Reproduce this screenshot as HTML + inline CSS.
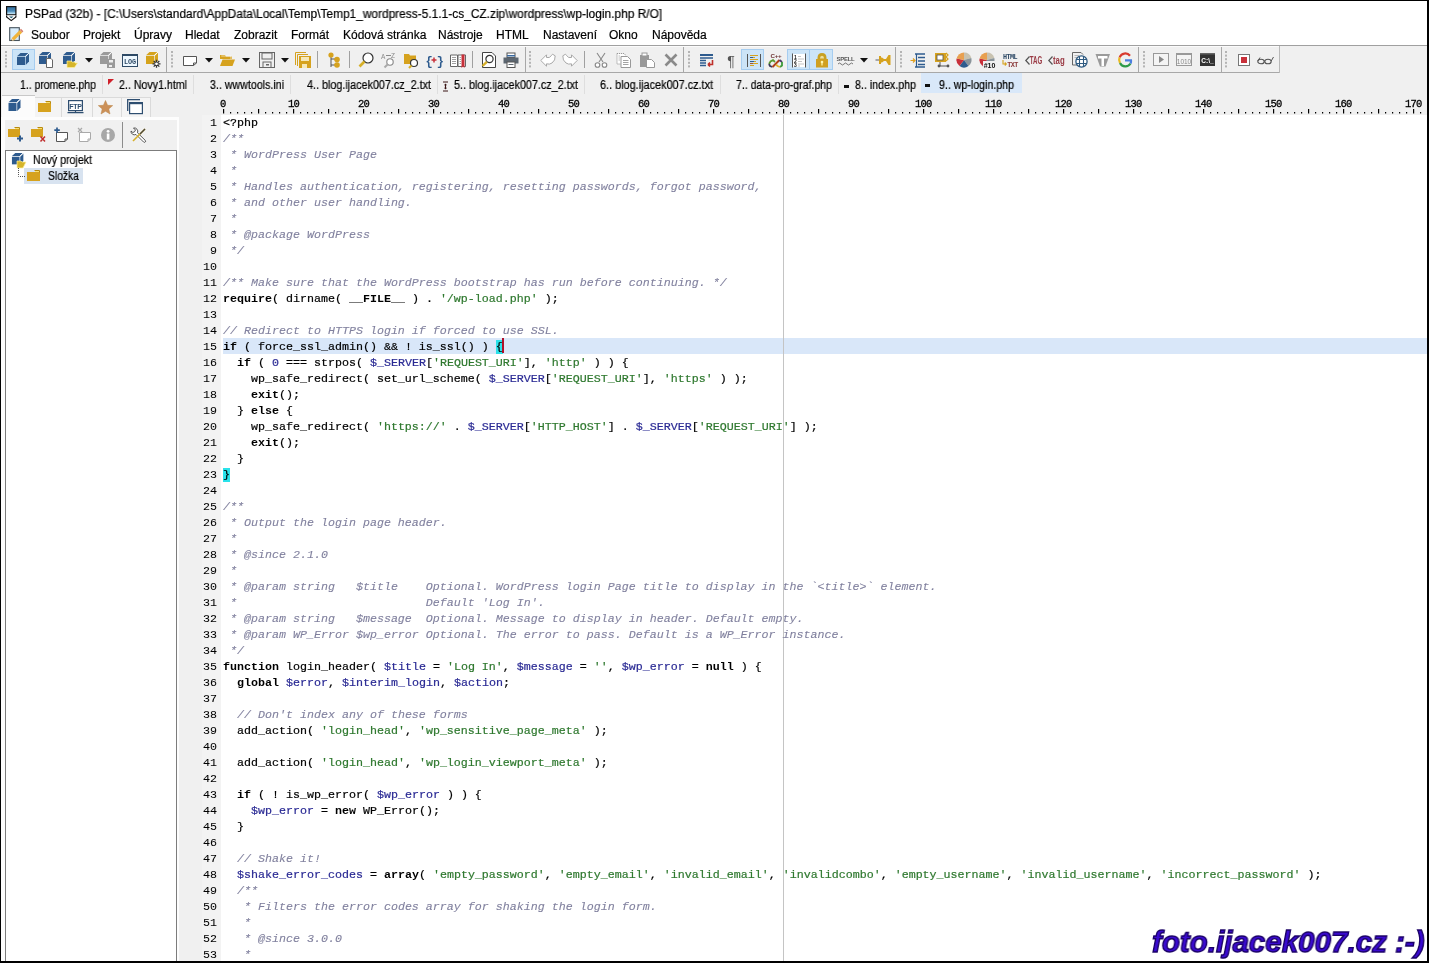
<!DOCTYPE html><html><head><meta charset="utf-8"><style>
html,body{margin:0;padding:0;width:1429px;height:963px;overflow:hidden;background:#fff}
.t{will-change:transform;-webkit-text-stroke:0.2px currentColor;position:absolute;white-space:pre;font-family:"Liberation Sans",sans-serif;}
.b{position:absolute}
.i{position:absolute;overflow:visible;will-change:transform}
.code{will-change:transform;-webkit-text-stroke:0.2px currentColor;position:absolute;left:223px;top:115px;font-family:"Liberation Mono",monospace;font-size:11.67px;line-height:16px;white-space:pre;color:#000}
.code div{height:16px}
.c{color:#80809e;font-style:italic;-webkit-text-stroke:0.1px currentColor}
.k{font-weight:bold;-webkit-text-stroke:0}
.s{color:#2e782e}
.v{color:#2a2a94}
.n{color:#2a2a94}
.ln{will-change:transform;-webkit-text-stroke:0.05px currentColor;position:absolute;left:180px;top:115px;width:37px;text-align:right;font-family:"Liberation Mono",monospace;font-size:11.67px;line-height:16px;color:#000;white-space:pre}
.rul{will-change:transform;-webkit-text-stroke:0.3px currentColor;position:absolute;font-family:"Liberation Mono",monospace;font-size:10.5px;line-height:10px;letter-spacing:-0.8px;color:#000;white-space:pre}
</style></head><body>

<div class="b" style="left:0px;top:0px;width:1429px;height:963px;background:#fff;"></div>
<svg class="i" style="left:6px;top:6px" width="11" height="16" viewBox="0 0 11 16"><defs><linearGradient id="tg" x1="0" y1="0" x2="0" y2="1"><stop offset="0" stop-color="#2f6c9c"/><stop offset="0.55" stop-color="#4a8ab8"/><stop offset="0.8" stop-color="#a8d4ec"/><stop offset="1" stop-color="#d8eef8"/></linearGradient></defs>
<rect x="0.6" y="0.6" width="9.3" height="8.2" fill="url(#tg)" stroke="#111" stroke-width="1.2"/>
<path d="M0.6 9.5 L0.6 11 L5.25 14.6 L9.9 11 L9.9 9.5" fill="#fff" stroke="#111" stroke-width="1.2"/>
<path d="M3 10.6 L7.5 10.6 L5.25 12.2Z" fill="#1e5a70"/></svg>
<div class="t " style="left:24.5px;top:7.84px;font-size:12px;line-height:12px;color:#000;transform:scaleX(0.993);transform-origin:0 0;">PSPad (32b) - [C:\Users\standard\AppData\Local\Temp\Temp1_wordpress-5.1.1-cs_CZ.zip\wordpress\wp-login.php R/O]</div>
<svg class="i" style="left:9px;top:27px" width="15" height="15" viewBox="0 0 15 15"><rect x="0.7" y="0.7" width="9.6" height="12.8" fill="#d8ecfa" stroke="#46525c" stroke-width="1.1"/>
<path d="M2.6 11.2 L10.8 3 L13.2 5.4 L5 13.6Z" fill="#f0b43c"/>
<path d="M10.8 3 L12 1.8 L14.4 4.2 L13.2 5.4Z" fill="#d88070"/>
<path d="M2.6 11.2 L2 13.8 L5 13.6Z" fill="#f8d8a0"/><path d="M2.2 12.6 L2 13.8 L3.4 13.6Z" fill="#111"/></svg>
<div class="t " style="left:30.9px;top:28.64px;font-size:12px;line-height:12px;color:#000;">Soubor</div>
<div class="t " style="left:83.1px;top:28.64px;font-size:12px;line-height:12px;color:#000;">Projekt</div>
<div class="t " style="left:134.1px;top:28.64px;font-size:12px;line-height:12px;color:#000;">Úpravy</div>
<div class="t " style="left:185.0px;top:28.64px;font-size:12px;line-height:12px;color:#000;">Hledat</div>
<div class="t " style="left:233.5px;top:28.64px;font-size:12px;line-height:12px;color:#000;">Zobrazit</div>
<div class="t " style="left:291.0px;top:28.64px;font-size:12px;line-height:12px;color:#000;">Formát</div>
<div class="t " style="left:343.0px;top:28.64px;font-size:12px;line-height:12px;color:#000;">Kódová stránka</div>
<div class="t " style="left:438.0px;top:28.64px;font-size:12px;line-height:12px;color:#000;">Nástroje</div>
<div class="t " style="left:496.0px;top:28.64px;font-size:12px;line-height:12px;color:#000;">HTML</div>
<div class="t " style="left:543.0px;top:28.64px;font-size:12px;line-height:12px;color:#000;">Nastavení</div>
<div class="t " style="left:609.0px;top:28.64px;font-size:12px;line-height:12px;color:#000;">Okno</div>
<div class="t " style="left:652.2px;top:28.64px;font-size:12px;line-height:12px;color:#000;">Nápověda</div>
<div class="b" style="left:1px;top:45px;width:1427px;height:1px;background:#a0a0a0;"></div>
<div class="b" style="left:1px;top:46px;width:1427px;height:50px;background:#f0f0f0;"></div>
<div class="b" style="left:1px;top:46px;width:1279px;height:1px;background:#fbfbfb;"></div>
<div class="b" style="left:1px;top:72px;width:1279px;height:1px;background:#a8a8a8;"></div>
<div class="b" style="left:1279px;top:46px;width:1px;height:27px;background:#b8b8b8;"></div>
<svg class="i" style="left:5px;top:51px" width="2" height="18" viewBox="0 0 2 18"><rect x="0" y="0.0" width="2" height="2" fill="#b4b4b4"/><rect x="0" y="3.6" width="2" height="2" fill="#b4b4b4"/><rect x="0" y="7.2" width="2" height="2" fill="#b4b4b4"/><rect x="0" y="10.8" width="2" height="2" fill="#b4b4b4"/><rect x="0" y="14.4" width="2" height="2" fill="#b4b4b4"/></svg>
<div class="b" style="left:12px;top:49px;width:23px;height:21px;background:#cce4f7;box-shadow:inset 0 0 0 1px #a6cdf0;"></div>
<svg class="i" style="left:16px;top:52px" width="16" height="16" viewBox="0 0 16 16"><g transform="translate(0,0) scale(1.0)"><rect x="1" y="5" width="8" height="8" fill="#2e5b8e"/>
<path d="M1 4.3 L4.5 1 L12.5 1 L9.2 4.3Z" fill="#2e5b8e"/>
<path d="M9.7 5 L13 1.6 L13 9.6 L9.7 13Z" fill="#2e5b8e"/>
<path d="M9.2 4.6 L12.8 1.2" stroke="#fff" stroke-width="0.9"/></g></svg>
<svg class="i" style="left:38px;top:52px" width="16" height="16" viewBox="0 0 16 16"><g transform="translate(0,-1) scale(1.0)"><rect x="1" y="5" width="8" height="8" fill="#2e5b8e"/>
<path d="M1 4.3 L4.5 1 L12.5 1 L9.2 4.3Z" fill="#2e5b8e"/>
<path d="M9.7 5 L13 1.6 L13 9.6 L9.7 13Z" fill="#2e5b8e"/>
<path d="M9.2 4.6 L12.8 1.2" stroke="#fff" stroke-width="0.9"/></g><path d="M8.5 6.5 L13 6.5 L14.5 8 L14.5 15.5 L8.5 15.5Z" fill="#fff" stroke="#666" stroke-width="1"/></svg>
<svg class="i" style="left:62px;top:52px" width="16" height="16" viewBox="0 0 16 16"><g transform="translate(0,-1) scale(1.0)"><rect x="1" y="5" width="8" height="8" fill="#2e5b8e"/>
<path d="M1 4.3 L4.5 1 L12.5 1 L9.2 4.3Z" fill="#2e5b8e"/>
<path d="M9.7 5 L13 1.6 L13 9.6 L9.7 13Z" fill="#2e5b8e"/>
<path d="M9.2 4.6 L12.8 1.2" stroke="#fff" stroke-width="0.9"/></g><path d="M5 9 L9 9 L10 10 L13 10 L13 11 L15.5 11 L12.5 15.5 L5 15.5Z" fill="#d6b52a" stroke="#fff4a0" stroke-width="0.7"/></svg>
<svg class="i" style="left:85px;top:58px" width="8" height="5" viewBox="0 0 8 5"><path d="M0 0 L8 0 L4 4.5Z" fill="#111"/></svg>
<svg class="i" style="left:99px;top:52px" width="16" height="16" viewBox="0 0 16 16"><g transform="translate(0,-1) scale(1.0)"><rect x="1" y="5" width="8" height="8" fill="#9a9a9a"/>
<path d="M1 4.3 L4.5 1 L12.5 1 L9.2 4.3Z" fill="#9a9a9a"/>
<path d="M9.7 5 L13 1.6 L13 9.6 L9.7 13Z" fill="#9a9a9a"/>
<path d="M9.2 4.6 L12.8 1.2" stroke="#fff" stroke-width="0.9"/></g><rect x="8" y="7" width="8" height="9" fill="#9a9a9a"/><rect x="10" y="8" width="4" height="2.5" fill="#eee"/><rect x="10" y="13" width="3" height="2" fill="#eee"/></svg>
<svg class="i" style="left:122px;top:52px" width="16" height="16" viewBox="0 0 16 16"><rect x="0.5" y="2.5" width="15" height="12" fill="#eef8ff" stroke="#2f4a66"/><rect x="0.5" y="2.5" width="15" height="1.5" fill="#2f4a66"/><text x="8" y="12.3" font-family="Liberation Mono" font-weight="bold" font-size="6.8" text-anchor="middle" fill="#2f4a66">LOG</text></svg>
<svg class="i" style="left:145px;top:52px" width="16" height="16" viewBox="0 0 16 16"><g transform="translate(0,-1) scale(1.0)"><rect x="1" y="5" width="8" height="8" fill="#d5a31c"/>
<path d="M1 4.3 L4.5 1 L12.5 1 L9.2 4.3Z" fill="#d5a31c"/>
<path d="M9.7 5 L13 1.6 L13 9.6 L9.7 13Z" fill="#d5a31c"/>
<path d="M9.2 4.6 L12.8 1.2" stroke="#fff" stroke-width="0.9"/></g><g transform="translate(11.5,11.8)" stroke="#333" stroke-width="1.3"><path d="M-4 0 L4 0 M0 -4 L0 4 M-2.8 -2.8 L2.8 2.8 M-2.8 2.8 L2.8 -2.8"/></g><circle cx="11.5" cy="11.8" r="1.4" fill="#fff"/></svg>
<div class="b" style="left:166px;top:47px;width:1px;height:25px;background:#a8a8a8;"></div>
<svg class="i" style="left:171px;top:51px" width="2" height="18" viewBox="0 0 2 18"><rect x="0" y="0.0" width="2" height="2" fill="#b4b4b4"/><rect x="0" y="3.6" width="2" height="2" fill="#b4b4b4"/><rect x="0" y="7.2" width="2" height="2" fill="#b4b4b4"/><rect x="0" y="10.8" width="2" height="2" fill="#b4b4b4"/><rect x="0" y="14.4" width="2" height="2" fill="#b4b4b4"/></svg>
<svg class="i" style="left:182px;top:55px" width="16" height="12" viewBox="0 0 16 12"><path d="M1.5 1.5 L14.5 1.5 L14.5 8 L11.5 10.5 L1.5 10.5Z" fill="#fff" stroke="#555"/><path d="M11.5 10.5 L11.5 8 L14.5 8" fill="none" stroke="#555"/></svg>
<svg class="i" style="left:205px;top:58px" width="8" height="5" viewBox="0 0 8 5"><path d="M0 0 L8 0 L4 4.5Z" fill="#111"/></svg>
<svg class="i" style="left:219px;top:52px" width="17" height="16" viewBox="0 0 17 16"><path d="M1 3 L6 3 L7 4.5 L13 4.5 L13 7 L1 7Z" fill="#d6a21e"/><path d="M1 14 L3.5 7.5 L16 7.5 L13.5 14Z" fill="#d6a21e"/><path d="M2.2 4 L12 4 L12 7" fill="none" stroke="#fff" stroke-width="0.6"/></svg>
<svg class="i" style="left:242px;top:58px" width="8" height="5" viewBox="0 0 8 5"><path d="M0 0 L8 0 L4 4.5Z" fill="#111"/></svg>
<svg class="i" style="left:259px;top:52px" width="16" height="16" viewBox="0 0 16 16"><rect x="0.5" y="0.5" width="15" height="15" fill="none" stroke="#666"/><rect x="3" y="1" width="10" height="6" fill="none" stroke="#666"/><rect x="4" y="10" width="8" height="5.5" fill="none" stroke="#666"/><rect x="7" y="12" width="3" height="1.5" fill="#666"/></svg>
<svg class="i" style="left:281px;top:58px" width="8" height="5" viewBox="0 0 8 5"><path d="M0 0 L8 0 L4 4.5Z" fill="#111"/></svg>
<svg class="i" style="left:295px;top:52px" width="16" height="16" viewBox="0 0 16 16"><path d="M0.5 13 L0.5 0.5 L11 0.5" fill="none" stroke="#d6a21e"/><path d="M2.5 14 L2.5 2.5 L13 2.5" fill="none" stroke="#d6a21e"/><rect x="4" y="4" width="12" height="12" fill="#d6a21e"/><rect x="6" y="5" width="8" height="4" fill="#f6e8b8"/><rect x="7" y="12" width="5" height="4" fill="#f6e8b8"/></svg>
<div class="b" style="left:317px;top:51px;width:1px;height:17px;background:#a0a0a0;"></div>
<svg class="i" style="left:328px;top:52px" width="12" height="16" viewBox="0 0 12 16"><path d="M3 2 L3 15 M3 7 L9 7 M3 13 L9 13" stroke="#555" stroke-width="1"/><circle cx="3" cy="3" r="2.6" fill="#d6a21e"/><circle cx="9" cy="7.5" r="2.8" fill="#d6a21e"/><circle cx="9" cy="13" r="2.8" fill="#d6a21e"/></svg>
<div class="b" style="left:349px;top:51px;width:1px;height:17px;background:#a0a0a0;"></div>
<svg class="i" style="left:358px;top:52px" width="16" height="16" viewBox="0 0 16 16"><circle cx="10" cy="6" r="5" fill="#fff" stroke="#333" stroke-width="1.2"/><path d="M6.5 9.5 L1.5 14.5" stroke="#d6b02a" stroke-width="2.6"/></svg>
<svg class="i" style="left:381px;top:52px" width="16" height="16" viewBox="0 0 16 16"><text x="0" y="7" font-family="Liberation Sans" font-size="6.5" fill="#888">A</text><text x="10" y="6" font-family="Liberation Sans" font-size="6.5" fill="#888">Z</text><path d="M5 3.5 L10 3.5" stroke="#888"/><circle cx="9" cy="10" r="3.2" fill="#fff" stroke="#888" stroke-width="1.1"/><path d="M6.8 12.3 L3.5 15.5" stroke="#aaa" stroke-width="2"/></svg>
<svg class="i" style="left:403px;top:52px" width="16" height="16" viewBox="0 0 16 16"><path d="M1 2 L6 2 L7 3.5 L13 3.5 L13 12 L1 12Z" fill="#d6a21e"/><circle cx="11" cy="11" r="3.5" fill="#fff" stroke="#333" stroke-width="1.2"/><path d="M8.5 13.5 L6 16" stroke="#d6b02a" stroke-width="2.2"/></svg>
<svg class="i" style="left:426px;top:52px" width="16" height="16" viewBox="0 0 16 16"><text x="8" y="12.5" font-family="Liberation Mono" font-weight="bold" font-size="12" text-anchor="middle" fill="#2e5b8e" letter-spacing="-1.5">{ }</text><path d="M8 5.5 L8 10.5 M5.5 8 L10.5 8" stroke="#c8303a" stroke-width="1.5"/></svg>
<svg class="i" style="left:450px;top:52px" width="16" height="16" viewBox="0 0 16 16"><path d="M0.5 3 H7.5 V14.5 H0.5Z M8 3 H15.5 V14.5 H8Z" fill="#fff" stroke="#666" stroke-width="1"/><path d="M2 5.5 H6 M2 7.5 H6 M2 9.5 H6 M2 11.5 H6 M9.5 5.5 H11 M9.5 7.5 H11 M9.5 9.5 H11 M9.5 11.5 H11" stroke="#888" stroke-width="0.8"/><path d="M11.5 2.5 H14.5 V16 L13 14.5 L11.5 16Z" fill="#c8303a"/></svg>
<div class="b" style="left:472px;top:51px;width:1px;height:17px;background:#a0a0a0;"></div>
<svg class="i" style="left:481px;top:52px" width="16" height="16" viewBox="0 0 16 16"><path d="M1.5 0.5 L11 0.5 L14.5 4 L14.5 15.5 L1.5 15.5Z" fill="#fff" stroke="#444"/><circle cx="8.5" cy="7" r="3.6" fill="#fff" stroke="#333" stroke-width="1.2"/><path d="M5.8 9.8 L1.5 14" stroke="#d6b02a" stroke-width="2.4"/></svg>
<svg class="i" style="left:503px;top:52px" width="16" height="16" viewBox="0 0 16 16"><rect x="4" y="1" width="8" height="4.5" fill="#fff" stroke="#555"/><rect x="4" y="3" width="8" height="1.5" fill="#3a6aa0"/><rect x="0.5" y="5.5" width="15" height="6" fill="#5c6670"/><rect x="4" y="10" width="8" height="5.5" fill="#fff" stroke="#555"/><rect x="5.5" y="12" width="5" height="1" fill="#5c6670"/></svg>
<div class="b" style="left:525px;top:47px;width:1px;height:25px;background:#a8a8a8;"></div>
<svg class="i" style="left:529px;top:51px" width="2" height="18" viewBox="0 0 2 18"><rect x="0" y="0.0" width="2" height="2" fill="#b4b4b4"/><rect x="0" y="3.6" width="2" height="2" fill="#b4b4b4"/><rect x="0" y="7.2" width="2" height="2" fill="#b4b4b4"/><rect x="0" y="10.8" width="2" height="2" fill="#b4b4b4"/><rect x="0" y="14.4" width="2" height="2" fill="#b4b4b4"/></svg>
<svg class="i" style="left:540px;top:52px" width="16" height="16" viewBox="0 0 16 16"><path d="M0.8 8.5 L6.5 2.8 L6.5 5.5 Q9.5 6.5 11.5 3.5 L12.5 2.2 L15.2 3.8 Q15.5 8.5 12 11 Q9.5 12.8 6.5 11.8 L6.5 14.2Z" fill="#fff" stroke="#a8a8a8" stroke-width="1"/></svg>
<svg class="i" style="left:562px;top:52px" width="16" height="16" viewBox="0 0 16 16"><g transform="translate(16,0) scale(-1,1)"><path d="M0.8 8.5 L6.5 2.8 L6.5 5.5 Q9.5 6.5 11.5 3.5 L12.5 2.2 L15.2 3.8 Q15.5 8.5 12 11 Q9.5 12.8 6.5 11.8 L6.5 14.2Z" fill="#fff" stroke="#a8a8a8" stroke-width="1"/></g></svg>
<div class="b" style="left:584px;top:51px;width:1px;height:17px;background:#a0a0a0;"></div>
<svg class="i" style="left:593px;top:52px" width="16" height="16" viewBox="0 0 16 16"><path d="M4 1 L10 10 M12 1 L6 10" stroke="#888" stroke-width="1.1"/><circle cx="4.5" cy="13" r="2.3" fill="#fff" stroke="#888" stroke-width="1.1"/><circle cx="11.5" cy="13" r="2.3" fill="#fff" stroke="#888" stroke-width="1.1"/></svg>
<svg class="i" style="left:616px;top:52px" width="16" height="16" viewBox="0 0 16 16"><path d="M1 1.5 H8 L9.5 3 V12 H1Z" fill="#fff" stroke="#999" stroke-dasharray="1.2 0.8"/><path d="M5 4.5 H11.5 L14.5 7.5 V15.5 H5Z" fill="#fff" stroke="#999"/><path d="M7 8.5 H12.5 M7 10.5 H12.5 M7 12.5 H12.5" stroke="#999" stroke-width="0.9"/><path d="M2.5 4 H4 M2.5 6 H4 M2.5 8 H4" stroke="#aaa" stroke-width="0.8"/></svg>
<svg class="i" style="left:639px;top:52px" width="16" height="16" viewBox="0 0 16 16"><rect x="1" y="3" width="9" height="12" fill="#999"/><rect x="3" y="1" width="5" height="3" fill="#fff" stroke="#999"/><path d="M7.5 7.5 H12.5 L15.5 10.5 V15.5 H7.5Z" fill="#fff" stroke="#999"/></svg>
<svg class="i" style="left:663px;top:52px" width="16" height="16" viewBox="0 0 16 16"><path d="M2.5 2.5 L13.5 13.5 M13.5 2.5 L2.5 13.5" stroke="#8a8a8a" stroke-width="2.6"/></svg>
<div class="b" style="left:683px;top:47px;width:1px;height:25px;background:#a8a8a8;"></div>
<svg class="i" style="left:688px;top:51px" width="2" height="18" viewBox="0 0 2 18"><rect x="0" y="0.0" width="2" height="2" fill="#b4b4b4"/><rect x="0" y="3.6" width="2" height="2" fill="#b4b4b4"/><rect x="0" y="7.2" width="2" height="2" fill="#b4b4b4"/><rect x="0" y="10.8" width="2" height="2" fill="#b4b4b4"/><rect x="0" y="14.4" width="2" height="2" fill="#b4b4b4"/></svg>
<svg class="i" style="left:699px;top:52px" width="16" height="16" viewBox="0 0 16 16"><path d="M1 3 H14" stroke="#2e5b8e" stroke-width="2"/><path d="M1 6 H14 M1 8.5 H7 M1 11 H7 M1 13.5 H7" stroke="#2e5b8e" stroke-width="1.3"/><path d="M13.5 8 V12.5 H9 M9 12.5 L11 10.5 M9 12.5 L11 14.5" stroke="#c0302a" stroke-width="1.6" fill="none"/></svg>
<svg class="i" style="left:723px;top:52px" width="16" height="16" viewBox="0 0 16 16"><text x="8" y="13.5" font-family="Liberation Sans" font-size="14" text-anchor="middle" fill="#555">¶</text></svg>
<div class="b" style="left:741px;top:49px;width:23px;height:21px;background:#cce4f7;box-shadow:inset 0 0 0 1px #a6cdf0;"></div>
<svg class="i" style="left:746px;top:52px" width="16" height="16" viewBox="0 0 16 16"><path d="M1.5 2 V15 M14.5 2 V15" stroke="#555" stroke-width="1"/><path d="M4 3.5 H12 M4 5.5 H9 M4 7.5 H12 M4 9.5 H10 M4 11.5 H12 M4 13.5 H8" stroke="#d6a21e" stroke-width="1.1"/><path d="M4 5.5 H7 M4 9.5 H8" stroke="#2e5b8e" stroke-width="1.1"/><path d="M4 11.5 H7" stroke="#a05a30" stroke-width="1.1"/></svg>
<svg class="i" style="left:768px;top:52px" width="16" height="16" viewBox="0 0 16 16"><text x="8" y="6.3" font-family="Liberation Sans" font-weight="bold" font-size="6.2" text-anchor="middle" fill="#6e3434" letter-spacing="-0.3">C++</text><path d="M7 10 L5 8.2 L2.5 9.5 L1 12" fill="none" stroke="#5a9a30" stroke-width="1.8"/><path d="M1 12 L2 14 L4.5 15" fill="none" stroke="#3a3a5a" stroke-width="1.8"/><path d="M4.5 15 L11.5 8" fill="none" stroke="#b0401e" stroke-width="2"/><path d="M11.5 8 L14 10" fill="none" stroke="#4a3a6a" stroke-width="1.8"/><path d="M14 10 L14 13.5 L12 15" fill="none" stroke="#3a9a3a" stroke-width="1.8"/><path d="M12 15 L9.5 14 L8 12.5" fill="none" stroke="#e0b030" stroke-width="1.8"/></svg>
<div class="b" style="left:787px;top:49px;width:46px;height:21px;background:#cce4f7;box-shadow:inset 0 0 0 1px #a6cdf0;"></div>
<div class="b" style="left:809px;top:49px;width:1px;height:21px;background:#a6cdf0;"></div>
<svg class="i" style="left:791px;top:52px" width="16" height="16" viewBox="0 0 16 16"><rect x="2" y="2" width="12" height="13" fill="#fff"/><path d="M1.5 1.5 V15.5 M14.5 1.5 V15.5" stroke="#555" stroke-width="1"/><text x="3" y="7" font-family="Liberation Sans" font-weight="bold" font-size="5" fill="#222">1</text><text x="3" y="11" font-family="Liberation Sans" font-weight="bold" font-size="5" fill="#222">2</text><text x="3" y="15" font-family="Liberation Sans" font-weight="bold" font-size="5" fill="#222">3</text><path d="M7 4.5 H10 M7 7 H13 M7 9.5 H11 M7 12 H13 M7 14 H9" stroke="#aaa" stroke-width="0.7"/></svg>
<svg class="i" style="left:814px;top:52px" width="16" height="16" viewBox="0 0 16 16"><path d="M3.5 7 V6 Q3.5 1 8 1 Q12.5 1 12.5 6 V7Z" fill="#c8a020"/><path d="M6 6.5 Q6 3.8 8 3.8 Q10 3.8 10 6.5Z" fill="#f0e0a0"/><rect x="2" y="7" width="12" height="8.5" fill="#d0a020"/><circle cx="8" cy="10" r="1.3" fill="#fff8b0"/><path d="M8 10 V13.5" stroke="#fff8b0" stroke-width="1.2"/></svg>
<svg class="i" style="left:837px;top:52px" width="17" height="16" viewBox="0 0 17 16"><text x="8.5" y="8.5" font-family="Liberation Sans" font-weight="bold" font-size="6" text-anchor="middle" fill="#555" letter-spacing="-0.3">SPELL</text><path d="M1 12 Q2.5 10 4 12 T7 12 T10 12 T13 12 T16 12" fill="none" stroke="#555" stroke-width="0.8"/></svg>
<svg class="i" style="left:860px;top:58px" width="8" height="5" viewBox="0 0 8 5"><path d="M0 0 L8 0 L4 4.5Z" fill="#111"/></svg>
<svg class="i" style="left:875px;top:52px" width="16" height="16" viewBox="0 0 16 16"><path d="M0.5 8 H6" stroke="#777" stroke-width="1.2"/><path d="M5 5.5 L7 5.5 L9 7 L11 7 L13.5 3 L15.5 3 L15.5 13 L13.5 13 L11 9 L9 9 L7 10.5 L5 10.5Z" fill="#d6a21e"/><path d="M5 4 V12" stroke="#d6a21e" stroke-width="2"/></svg>
<div class="b" style="left:895px;top:47px;width:1px;height:25px;background:#a8a8a8;"></div>
<svg class="i" style="left:900px;top:51px" width="2" height="18" viewBox="0 0 2 18"><rect x="0" y="0.0" width="2" height="2" fill="#b4b4b4"/><rect x="0" y="3.6" width="2" height="2" fill="#b4b4b4"/><rect x="0" y="7.2" width="2" height="2" fill="#b4b4b4"/><rect x="0" y="10.8" width="2" height="2" fill="#b4b4b4"/><rect x="0" y="14.4" width="2" height="2" fill="#b4b4b4"/></svg>
<svg class="i" style="left:910px;top:52px" width="16" height="16" viewBox="0 0 16 16"><path d="M5 2 H15 M8 5.5 H15 M8 9 H15 M8 12.5 H15 M5 15 H15" stroke="#2e5b8e" stroke-width="1.3"/><path d="M6.5 2 V15" stroke="#2e5b8e" stroke-width="1.2"/><path d="M0.5 8.5 H5 M3 6.5 L5 8.5 L3 10.5" stroke="#e0a020" stroke-width="1.2" fill="none"/></svg>
<svg class="i" style="left:934px;top:52px" width="16" height="16" viewBox="0 0 16 16"><rect x="1" y="1" width="11" height="9" fill="#d6a21e"/><rect x="3" y="3" width="6" height="5" fill="#fff" stroke="#555" stroke-width="0.8"/><path d="M12 1 L14 3 L12 5 L14 7 L12 9" stroke="#d6a21e" stroke-width="1.2" fill="none"/><path d="M6 10 V14 M5 14 H14" stroke="#555" stroke-width="1"/><circle cx="5" cy="14" r="1.4" fill="#555"/><circle cx="14" cy="14" r="1.4" fill="#555"/></svg>
<svg class="i" style="left:956px;top:52px" width="16" height="16" viewBox="0 0 16 16"><path d="M8 8 L8 0.5 A7.5 7.5 0 0 1 15.3 6Z" fill="#c8c2b0"/>
<path d="M8 8 L15.3 6 A7.5 7.5 0 0 1 12.5 14Z" fill="#8a949a"/>
<path d="M8 8 L12.5 14 A7.5 7.5 0 0 1 3.5 14Z" fill="#2e5b8e"/>
<path d="M8 8 L3.5 14 A7.5 7.5 0 0 1 0.6 6.5Z" fill="#c8303a"/>
<path d="M8 8 L0.6 6.5 A7.5 7.5 0 0 1 8 0.5Z" fill="#e8a050"/></svg>
<svg class="i" style="left:979px;top:52px" width="16" height="16" viewBox="0 0 16 16"><path d="M8 8 L8 0.5 A7.5 7.5 0 0 1 15.3 6Z" fill="#c8c2b0"/>
<path d="M8 8 L15.3 6 A7.5 7.5 0 0 1 12.5 14Z" fill="#8a949a"/>
<path d="M8 8 L12.5 14 A7.5 7.5 0 0 1 3.5 14Z" fill="#2e5b8e"/>
<path d="M8 8 L3.5 14 A7.5 7.5 0 0 1 0.6 6.5Z" fill="#c8303a"/>
<path d="M8 8 L0.6 6.5 A7.5 7.5 0 0 1 8 0.5Z" fill="#e8a050"/><rect x="4" y="9" width="13" height="7" fill="#f0f0f0"/><text x="10.5" y="15.8" font-family="Liberation Sans" font-weight="bold" font-size="7" text-anchor="middle" fill="#111">#10</text></svg>
<svg class="i" style="left:1001px;top:51px" width="18" height="18" viewBox="0 0 18 18"><text x="9" y="7.5" font-family="Liberation Mono" font-weight="bold" font-size="6.8" text-anchor="middle" fill="#2e4a66" letter-spacing="-0.6">HTML</text><text x="11.5" y="15.8" font-family="Liberation Mono" font-weight="bold" font-size="6.8" text-anchor="middle" fill="#8a3a3a" letter-spacing="-0.6">TXT</text><path d="M2 9 V13 H5 M3.8 11.5 L5.3 13 L3.8 14.5" stroke="#d6a21e" stroke-width="1.1" fill="none"/></svg>
<svg class="i" style="left:1025px;top:52px" width="17" height="16" viewBox="0 0 17 16"><path d="M4.5 4.5 L0.8 8.5 L4.5 12.5" fill="none" stroke="#555" stroke-width="1.2"/><text x="0" y="0" transform="translate(4.8,12) scale(0.62,1)" font-family="Liberation Sans" font-weight="bold" font-size="10" fill="#9a3a44">TAG</text></svg>
<svg class="i" style="left:1048px;top:52px" width="17" height="16" viewBox="0 0 17 16"><path d="M4.5 4.5 L0.8 8.5 L4.5 12.5" fill="none" stroke="#555" stroke-width="1.2"/><text x="0" y="0" transform="translate(5,12) scale(0.78,1)" font-family="Liberation Sans" font-weight="bold" font-size="10" fill="#9a3a44">tag</text></svg>
<svg class="i" style="left:1071px;top:51px" width="17" height="18" viewBox="0 0 17 18"><path d="M6 14 H1.5 V1.5 H10 L12 3.5" fill="none" stroke="#666" stroke-width="1"/><path d="M3.5 4.5 H8 M3.5 6.5 H6" stroke="#aaa" stroke-width="0.8"/><circle cx="10.5" cy="10.5" r="5.6" fill="#fff" stroke="#2e5a80" stroke-width="1.3"/><path d="M8.5 5.2 V15.8 M12.5 5.2 V15.8 M5.2 8.5 H15.8 M5.2 12.5 H15.8" stroke="#2e5a80" stroke-width="1.1"/></svg>
<svg class="i" style="left:1095px;top:52px" width="16" height="16" viewBox="0 0 16 16"><path d="M0.5 2 H15 L10.5 14.5 H5Z" fill="#9a9a9a"/><path d="M3 4 H12.5 V6.5 H9 V14 H6.5 V6.5 H3Z" fill="#fff"/></svg>
<svg class="i" style="left:1117px;top:52px" width="16" height="16" viewBox="0 0 16 16"><path d="M13 3.8 A6 6 0 0 0 2.6 5.5" fill="none" stroke="#d83a2e" stroke-width="2.2"/><path d="M2.6 5.5 A6 6 0 0 0 3 11" fill="none" stroke="#e8b820" stroke-width="2.2"/><path d="M3 11 A6 6 0 0 0 13.5 11.5" fill="none" stroke="#2e9a48" stroke-width="2.2"/><path d="M8 8.3 H14 A6 6 0 0 1 13.5 11.5" fill="none" stroke="#4a7ee0" stroke-width="2.2"/></svg>
<div class="b" style="left:1138px;top:47px;width:1px;height:25px;background:#a8a8a8;"></div>
<svg class="i" style="left:1143px;top:51px" width="2" height="18" viewBox="0 0 2 18"><rect x="0" y="0.0" width="2" height="2" fill="#b4b4b4"/><rect x="0" y="3.6" width="2" height="2" fill="#b4b4b4"/><rect x="0" y="7.2" width="2" height="2" fill="#b4b4b4"/><rect x="0" y="10.8" width="2" height="2" fill="#b4b4b4"/><rect x="0" y="14.4" width="2" height="2" fill="#b4b4b4"/></svg>
<svg class="i" style="left:1153px;top:51px" width="16" height="16" viewBox="0 0 16 16"><rect x="0.5" y="2.5" width="15" height="12" fill="#f4f4f4" stroke="#999"/><path d="M6 5 L11 8.5 L6 12Z" fill="#888"/></svg>
<svg class="i" style="left:1176px;top:51px" width="16" height="16" viewBox="0 0 16 16"><rect x="0.5" y="2.5" width="15" height="12" fill="#f4f4f4" stroke="#999"/><rect x="0.5" y="2.5" width="15" height="1.5" fill="#999"/><text x="8" y="12.5" font-family="Liberation Sans" font-size="6.5" text-anchor="middle" fill="#888">1010</text></svg>
<svg class="i" style="left:1200px;top:51px" width="16" height="16" viewBox="0 0 16 16"><rect x="0" y="2" width="15" height="13" fill="#333"/><rect x="0" y="2" width="15" height="1.5" fill="#666"/><text x="7.5" y="12" font-family="Liberation Sans" font-weight="bold" font-size="6.5" text-anchor="middle" fill="#fff">C:\_</text></svg>
<div class="b" style="left:1221px;top:47px;width:1px;height:25px;background:#a8a8a8;"></div>
<svg class="i" style="left:1225px;top:51px" width="2" height="18" viewBox="0 0 2 18"><rect x="0" y="0.0" width="2" height="2" fill="#b4b4b4"/><rect x="0" y="3.6" width="2" height="2" fill="#b4b4b4"/><rect x="0" y="7.2" width="2" height="2" fill="#b4b4b4"/><rect x="0" y="10.8" width="2" height="2" fill="#b4b4b4"/><rect x="0" y="14.4" width="2" height="2" fill="#b4b4b4"/></svg>
<svg class="i" style="left:1237px;top:52px" width="16" height="16" viewBox="0 0 16 16"><rect x="1.5" y="2.5" width="11" height="11" fill="#fff" stroke="#777"/><rect x="4" y="5" width="6" height="6" fill="#c8303a"/></svg>
<svg class="i" style="left:1257px;top:52px" width="17" height="16" viewBox="0 0 17 16"><ellipse cx="4" cy="9.5" rx="3.2" ry="2.3" fill="none" stroke="#555" stroke-width="1.1"/><ellipse cx="11" cy="9.5" rx="3.2" ry="2.3" fill="none" stroke="#555" stroke-width="1.1"/><path d="M7.2 9 H7.8 M0.8 9 L3 5.5 M14.2 9 L16.5 5" stroke="#555" stroke-width="1" fill="none"/></svg>
<div class="b" style="left:921px;top:73px;width:101px;height:20px;background:#d9e8f9;"></div>
<div class="t " style="left:19.5px;top:78.84px;font-size:12px;line-height:12px;color:#000;transform:scaleX(0.869);transform-origin:0 0;">1.. promene.php</div>
<div class="t " style="left:118.5px;top:78.84px;font-size:12px;line-height:12px;color:#000;transform:scaleX(0.887);transform-origin:0 0;">2.. Novy1.html</div>
<div class="t " style="left:209.5px;top:78.84px;font-size:12px;line-height:12px;color:#000;transform:scaleX(0.888);transform-origin:0 0;">3.. wwwtools.ini</div>
<div class="t " style="left:306.5px;top:78.84px;font-size:12px;line-height:12px;color:#000;transform:scaleX(0.898);transform-origin:0 0;">4.. blog.ijacek007.cz_2.txt</div>
<div class="t " style="left:453.5px;top:78.84px;font-size:12px;line-height:12px;color:#000;transform:scaleX(0.898);transform-origin:0 0;">5.. blog.ijacek007.cz_2.txt</div>
<div class="t " style="left:599.5px;top:78.84px;font-size:12px;line-height:12px;color:#000;transform:scaleX(0.906);transform-origin:0 0;">6.. blog.ijacek007.cz.txt</div>
<div class="t " style="left:735.5px;top:78.84px;font-size:12px;line-height:12px;color:#000;transform:scaleX(0.877);transform-origin:0 0;">7.. data-pro-graf.php</div>
<div class="t " style="left:854.5px;top:78.84px;font-size:12px;line-height:12px;color:#000;transform:scaleX(0.888);transform-origin:0 0;">8.. index.php</div>
<div class="t " style="left:938.5px;top:78.84px;font-size:12px;line-height:12px;color:#000;transform:scaleX(0.885);transform-origin:0 0;">9.. wp-login.php</div>
<div class="b" style="left:102px;top:75px;width:1px;height:19px;background:#dedede;"></div>
<div class="b" style="left:193px;top:75px;width:1px;height:19px;background:#dedede;"></div>
<div class="b" style="left:290px;top:75px;width:1px;height:19px;background:#dedede;"></div>
<div class="b" style="left:437px;top:75px;width:1px;height:19px;background:#dedede;"></div>
<div class="b" style="left:584px;top:75px;width:1px;height:19px;background:#dedede;"></div>
<div class="b" style="left:720px;top:75px;width:1px;height:19px;background:#dedede;"></div>
<div class="b" style="left:838px;top:75px;width:1px;height:19px;background:#dedede;"></div>
<svg class="i" style="left:108px;top:79px" width="6" height="6" viewBox="0 0 6 6"><path d="M0 0 L6 0 L0 6Z" fill="#d0202a"/></svg>
<svg class="i" style="left:443px;top:80.5px" width="6" height="11" viewBox="0 0 6 11"><path d="M0 1 H5 M0 10 H5 M2.5 3 V8" stroke="#3a1414" stroke-width="1.1" fill="none"/><path d="M1 4.2 L2.5 2.6 L4 4.2Z M1 6.8 L2.5 8.4 L4 6.8Z" fill="#3a1414"/></svg>
<div class="b" style="left:844px;top:85px;width:5px;height:3px;background:#111;"></div>
<div class="b" style="left:925px;top:84px;width:5px;height:3px;background:#111;"></div>
<div class="b" style="left:1px;top:95px;width:178px;height:866px;background:#f0f0f0;"></div>
<div class="b" style="left:34px;top:97px;width:28px;height:20px;background:#f4f4f4;box-shadow:inset -1px 0 0 #dadada, inset 0 1px 0 #dadada;"></div>
<div class="b" style="left:62px;top:97px;width:31px;height:20px;background:#f4f4f4;box-shadow:inset -1px 0 0 #dadada, inset 0 1px 0 #dadada;"></div>
<div class="b" style="left:93px;top:97px;width:29px;height:20px;background:#f4f4f4;box-shadow:inset -1px 0 0 #dadada, inset 0 1px 0 #dadada;"></div>
<div class="b" style="left:122px;top:97px;width:29px;height:20px;background:#f4f4f4;box-shadow:inset -1px 0 0 #dadada, inset 0 1px 0 #dadada;"></div>
<div class="b" style="left:2px;top:95px;width:33px;height:23px;background:#fcfcfc;box-shadow:inset 0 1px 0 #c8c8c8;"></div>
<div class="b" style="left:1px;top:117px;width:178px;height:846px;background:#fdfdfd;"></div>
<div class="b" style="left:5px;top:120px;width:172px;height:30px;background:#f0f0f0;"></div>
<div class="b" style="left:5px;top:150px;width:172px;height:815px;background:#fff;box-shadow:inset 0 0 0 1px #7c7c7c;"></div>
<svg class="i" style="left:8px;top:98px" width="14" height="14" viewBox="0 0 14 14"><g transform="translate(-0.5,0) scale(1.0)"><rect x="1" y="5" width="8" height="8" fill="#2e5b8e"/>
<path d="M1 4.3 L4.5 1 L12.5 1 L9.2 4.3Z" fill="#2e5b8e"/>
<path d="M9.7 5 L13 1.6 L13 9.6 L9.7 13Z" fill="#2e5b8e"/>
<path d="M9.2 4.6 L12.8 1.2" stroke="#fff" stroke-width="0.9"/></g></svg>
<svg class="i" style="left:37px;top:100px" width="14" height="13" viewBox="0 0 14 13"><path d="M1 3 H14 V12 H1Z" fill="#d6a21e"/><path d="M8.5 1.5 H13.5 V3.5" fill="none" stroke="#b88a10" stroke-width="1"/><path d="M9 2.5 H13" stroke="#f8e070" stroke-width="1"/></svg>
<svg class="i" style="left:67px;top:100px" width="17" height="14" viewBox="0 0 17 14"><rect x="1.6" y="0.6" width="13.8" height="10" fill="#fff" stroke="#2e4e70" stroke-width="1.2"/><text x="8.5" y="8.6" font-family="Liberation Sans" font-weight="bold" font-size="7" text-anchor="middle" fill="#2e4e70" letter-spacing="-0.2">FTP</text><path d="M8.5 10.6 V12.5 M0.5 12.6 H16.5" stroke="#2e4e70" stroke-width="1.2"/></svg>
<svg class="i" style="left:98px;top:100px" width="15" height="15" viewBox="0 0 15 15"><path d="M7.5 0.5 L9.6 5.3 L14.7 5.6 L10.8 8.9 L12 14 L7.5 11.3 L3 14 L4.2 8.9 L0.3 5.6 L5.4 5.3Z" fill="#cc9058" stroke="#b8864a" stroke-width="0.5"/></svg>
<svg class="i" style="left:127px;top:99px" width="17" height="16" viewBox="0 0 17 16"><path d="M0.7 12 V0.7 H13" fill="none" stroke="#2e4e70" stroke-width="1.3"/><rect x="2.6" y="3.6" width="12.8" height="11" fill="#fff" stroke="#2e4e70" stroke-width="1.2"/><rect x="2.6" y="3.6" width="12.8" height="1.6" fill="#2e4e70"/></svg>
<svg class="i" style="left:7px;top:127px" width="17" height="16" viewBox="0 0 17 16"><path d="M1 2 H13 V10 H1Z" fill="#d6a21e"/><path d="M7.5 0.5 H12.5 V2.5" fill="none" stroke="#b88a10" stroke-width="1"/><path d="M8 1.5 H12" stroke="#f8e070" stroke-width="1"/><path d="M13 8.5 V14.5 M10 11.5 H16" stroke="#2e5b8e" stroke-width="2"/></svg>
<svg class="i" style="left:30px;top:127px" width="17" height="16" viewBox="0 0 17 16"><path d="M1 2 H13 V10 H1Z" fill="#d6a21e"/><path d="M7.5 0.5 H12.5 V2.5" fill="none" stroke="#b88a10" stroke-width="1"/><path d="M8 1.5 H12" stroke="#f8e070" stroke-width="1"/><path d="M10.5 9.5 L15 14.5 M15 9.5 L10.5 14.5" stroke="#c03030" stroke-width="1.5"/></svg>
<svg class="i" style="left:53px;top:127px" width="17" height="16" viewBox="0 0 17 16"><path d="M3.5 5.5 H14.5 V12 L12 14.5 H3.5Z" fill="#fff" stroke="#555"/><path d="M12 14.5 V12 H14.5" fill="none" stroke="#555"/><path d="M4 0.5 V6 M1.3 3.2 H6.8" stroke="#2e5b8e" stroke-width="1.7"/></svg>
<svg class="i" style="left:76px;top:127px" width="17" height="16" viewBox="0 0 17 16"><path d="M3.5 5.5 H14.5 V12 L12 14.5 H3.5Z" fill="#fff" stroke="#aaa"/><path d="M12 14.5 V12 H14.5" fill="none" stroke="#aaa"/><path d="M2 1 L6 5 M6 1 L2 5" stroke="#aaa" stroke-width="1.2"/></svg>
<svg class="i" style="left:100px;top:127px" width="16" height="16" viewBox="0 0 16 16"><circle cx="8" cy="8" r="7" fill="#a8a8a8"/><rect x="6.8" y="6.5" width="2.6" height="6" fill="#fff"/><circle cx="8.1" cy="4.3" r="1.4" fill="#fff"/></svg>
<div class="b" style="left:122px;top:122px;width:1px;height:26px;background:#8c8c8c;"></div>
<svg class="i" style="left:130px;top:127px" width="17" height="16" viewBox="0 0 17 16"><path d="M5 6 L14.5 15" stroke="#fff" stroke-width="3.5"/><path d="M5 6 L14.5 15" stroke="#555" stroke-width="3.5" stroke-opacity="0" /><path d="M1 4 A3.5 3.5 0 0 0 6 7.5 L13.5 15 A1.2 1.2 0 0 0 15.2 13.3 L7.5 5.8 A3.5 3.5 0 0 0 3.5 1 L5.5 3 L4.5 4.8 L2.8 5.5Z" fill="#fff" stroke="#444" stroke-width="0.9"/><path d="M15 2 L3 14" stroke="#d6b02a" stroke-width="1.6"/><path d="M15 2 L10 7" stroke="#444" stroke-width="1.2"/></svg>
<svg class="i" style="left:11px;top:152px" width="17" height="17" viewBox="0 0 17 17"><g transform="translate(0,0) scale(0.95)"><rect x="1" y="5" width="8" height="8" fill="#2e5b8e"/>
<path d="M1 4.3 L4.5 1 L12.5 1 L9.2 4.3Z" fill="#2e5b8e"/>
<path d="M9.7 5 L13 1.6 L13 9.6 L9.7 13Z" fill="#2e5b8e"/>
<path d="M9.2 4.6 L12.8 1.2" stroke="#fff" stroke-width="0.9"/></g><path d="M6 9 L10 9 L11 10 L15 10 L12 16 L6 16Z" fill="#d6b52a" stroke="#fff4a0" stroke-width="0.7"/></svg>
<div class="t " style="left:33.0px;top:153.84px;font-size:12px;line-height:12px;color:#000;transform:scaleX(0.885);transform-origin:0 0;">Nový projekt</div>
<div class="b" style="left:24px;top:168px;width:59px;height:16px;background:#d8e3f0;"></div>
<svg class="i" style="left:18px;top:168px" width="8" height="10" viewBox="0 0 8 10"><path d="M0.5 0 V8.5 H8" stroke="#555" stroke-width="1" stroke-dasharray="1 1" fill="none"/></svg>
<svg class="i" style="left:26px;top:169px" width="15" height="13" viewBox="0 0 15 13"><path d="M1 3 H14 V12 H1Z" fill="#d6a21e"/><path d="M8.5 1.5 H13.5 V3.5" fill="none" stroke="#b88a10" stroke-width="1"/><path d="M9 2.5 H13" stroke="#f8e070" stroke-width="1"/></svg>
<div class="t " style="left:48.0px;top:169.84px;font-size:12px;line-height:12px;color:#000;transform:scaleX(0.86);transform-origin:0 0;">Složka</div>
<div class="b" style="left:179px;top:95px;width:1249px;height:20px;background:#f0f0f0;"></div>
<div class="b" style="left:179px;top:115px;width:42px;height:846px;background:#f0f0f0;"></div>
<div class="b" style="left:202px;top:115px;width:19px;height:846px;background:#f3f3f3;"></div>
<div class="b" style="left:221px;top:115px;width:1207px;height:846px;background:#fff;"></div>
<div class="b" style="left:223px;top:338px;width:1205px;height:16px;background:#d9e7f9;"></div>
<div class="b" style="left:783px;top:115px;width:1px;height:846px;background:#c4c4c4;"></div>
<svg class="i" style="left:0;top:109px" width="1428" height="6"><rect x="223.0" y="0" width="1.2" height="4.5" fill="#000"/><rect x="230.0" y="3" width="1.2" height="1.5" fill="#000"/><rect x="237.0" y="3" width="1.2" height="1.5" fill="#000"/><rect x="244.0" y="3" width="1.2" height="1.5" fill="#000"/><rect x="251.0" y="3" width="1.2" height="1.5" fill="#000"/><rect x="258.0" y="0" width="1.2" height="4.5" fill="#000"/><rect x="265.0" y="3" width="1.2" height="1.5" fill="#000"/><rect x="272.0" y="3" width="1.2" height="1.5" fill="#000"/><rect x="279.0" y="3" width="1.2" height="1.5" fill="#000"/><rect x="286.0" y="3" width="1.2" height="1.5" fill="#000"/><rect x="293.0" y="0" width="1.2" height="4.5" fill="#000"/><rect x="300.0" y="3" width="1.2" height="1.5" fill="#000"/><rect x="307.0" y="3" width="1.2" height="1.5" fill="#000"/><rect x="314.0" y="3" width="1.2" height="1.5" fill="#000"/><rect x="321.0" y="3" width="1.2" height="1.5" fill="#000"/><rect x="328.0" y="0" width="1.2" height="4.5" fill="#000"/><rect x="335.0" y="3" width="1.2" height="1.5" fill="#000"/><rect x="342.0" y="3" width="1.2" height="1.5" fill="#000"/><rect x="349.0" y="3" width="1.2" height="1.5" fill="#000"/><rect x="356.0" y="3" width="1.2" height="1.5" fill="#000"/><rect x="363.0" y="0" width="1.2" height="4.5" fill="#000"/><rect x="370.0" y="3" width="1.2" height="1.5" fill="#000"/><rect x="377.0" y="3" width="1.2" height="1.5" fill="#000"/><rect x="384.0" y="3" width="1.2" height="1.5" fill="#000"/><rect x="391.0" y="3" width="1.2" height="1.5" fill="#000"/><rect x="398.0" y="0" width="1.2" height="4.5" fill="#000"/><rect x="405.0" y="3" width="1.2" height="1.5" fill="#000"/><rect x="412.0" y="3" width="1.2" height="1.5" fill="#000"/><rect x="419.0" y="3" width="1.2" height="1.5" fill="#000"/><rect x="426.0" y="3" width="1.2" height="1.5" fill="#000"/><rect x="433.0" y="0" width="1.2" height="4.5" fill="#000"/><rect x="440.0" y="3" width="1.2" height="1.5" fill="#000"/><rect x="447.0" y="3" width="1.2" height="1.5" fill="#000"/><rect x="454.0" y="3" width="1.2" height="1.5" fill="#000"/><rect x="461.0" y="3" width="1.2" height="1.5" fill="#000"/><rect x="468.0" y="0" width="1.2" height="4.5" fill="#000"/><rect x="475.0" y="3" width="1.2" height="1.5" fill="#000"/><rect x="482.0" y="3" width="1.2" height="1.5" fill="#000"/><rect x="489.0" y="3" width="1.2" height="1.5" fill="#000"/><rect x="496.0" y="3" width="1.2" height="1.5" fill="#000"/><rect x="503.0" y="0" width="1.2" height="4.5" fill="#000"/><rect x="510.0" y="3" width="1.2" height="1.5" fill="#000"/><rect x="517.0" y="3" width="1.2" height="1.5" fill="#000"/><rect x="524.0" y="3" width="1.2" height="1.5" fill="#000"/><rect x="531.0" y="3" width="1.2" height="1.5" fill="#000"/><rect x="538.0" y="0" width="1.2" height="4.5" fill="#000"/><rect x="545.0" y="3" width="1.2" height="1.5" fill="#000"/><rect x="552.0" y="3" width="1.2" height="1.5" fill="#000"/><rect x="559.0" y="3" width="1.2" height="1.5" fill="#000"/><rect x="566.0" y="3" width="1.2" height="1.5" fill="#000"/><rect x="573.0" y="0" width="1.2" height="4.5" fill="#000"/><rect x="580.0" y="3" width="1.2" height="1.5" fill="#000"/><rect x="587.0" y="3" width="1.2" height="1.5" fill="#000"/><rect x="594.0" y="3" width="1.2" height="1.5" fill="#000"/><rect x="601.0" y="3" width="1.2" height="1.5" fill="#000"/><rect x="608.0" y="0" width="1.2" height="4.5" fill="#000"/><rect x="615.0" y="3" width="1.2" height="1.5" fill="#000"/><rect x="622.0" y="3" width="1.2" height="1.5" fill="#000"/><rect x="629.0" y="3" width="1.2" height="1.5" fill="#000"/><rect x="636.0" y="3" width="1.2" height="1.5" fill="#000"/><rect x="643.0" y="0" width="1.2" height="4.5" fill="#000"/><rect x="650.0" y="3" width="1.2" height="1.5" fill="#000"/><rect x="657.0" y="3" width="1.2" height="1.5" fill="#000"/><rect x="664.0" y="3" width="1.2" height="1.5" fill="#000"/><rect x="671.0" y="3" width="1.2" height="1.5" fill="#000"/><rect x="678.0" y="0" width="1.2" height="4.5" fill="#000"/><rect x="685.0" y="3" width="1.2" height="1.5" fill="#000"/><rect x="692.0" y="3" width="1.2" height="1.5" fill="#000"/><rect x="699.0" y="3" width="1.2" height="1.5" fill="#000"/><rect x="706.0" y="3" width="1.2" height="1.5" fill="#000"/><rect x="713.0" y="0" width="1.2" height="4.5" fill="#000"/><rect x="720.0" y="3" width="1.2" height="1.5" fill="#000"/><rect x="727.0" y="3" width="1.2" height="1.5" fill="#000"/><rect x="734.0" y="3" width="1.2" height="1.5" fill="#000"/><rect x="741.0" y="3" width="1.2" height="1.5" fill="#000"/><rect x="748.0" y="0" width="1.2" height="4.5" fill="#000"/><rect x="755.0" y="3" width="1.2" height="1.5" fill="#000"/><rect x="762.0" y="3" width="1.2" height="1.5" fill="#000"/><rect x="769.0" y="3" width="1.2" height="1.5" fill="#000"/><rect x="776.0" y="3" width="1.2" height="1.5" fill="#000"/><rect x="783.0" y="0" width="1.2" height="4.5" fill="#000"/><rect x="790.0" y="3" width="1.2" height="1.5" fill="#000"/><rect x="797.0" y="3" width="1.2" height="1.5" fill="#000"/><rect x="804.0" y="3" width="1.2" height="1.5" fill="#000"/><rect x="811.0" y="3" width="1.2" height="1.5" fill="#000"/><rect x="818.0" y="0" width="1.2" height="4.5" fill="#000"/><rect x="825.0" y="3" width="1.2" height="1.5" fill="#000"/><rect x="832.0" y="3" width="1.2" height="1.5" fill="#000"/><rect x="839.0" y="3" width="1.2" height="1.5" fill="#000"/><rect x="846.0" y="3" width="1.2" height="1.5" fill="#000"/><rect x="853.0" y="0" width="1.2" height="4.5" fill="#000"/><rect x="860.0" y="3" width="1.2" height="1.5" fill="#000"/><rect x="867.0" y="3" width="1.2" height="1.5" fill="#000"/><rect x="874.0" y="3" width="1.2" height="1.5" fill="#000"/><rect x="881.0" y="3" width="1.2" height="1.5" fill="#000"/><rect x="888.0" y="0" width="1.2" height="4.5" fill="#000"/><rect x="895.0" y="3" width="1.2" height="1.5" fill="#000"/><rect x="902.0" y="3" width="1.2" height="1.5" fill="#000"/><rect x="909.0" y="3" width="1.2" height="1.5" fill="#000"/><rect x="916.0" y="3" width="1.2" height="1.5" fill="#000"/><rect x="923.0" y="0" width="1.2" height="4.5" fill="#000"/><rect x="930.0" y="3" width="1.2" height="1.5" fill="#000"/><rect x="937.0" y="3" width="1.2" height="1.5" fill="#000"/><rect x="944.0" y="3" width="1.2" height="1.5" fill="#000"/><rect x="951.0" y="3" width="1.2" height="1.5" fill="#000"/><rect x="958.0" y="0" width="1.2" height="4.5" fill="#000"/><rect x="965.0" y="3" width="1.2" height="1.5" fill="#000"/><rect x="972.0" y="3" width="1.2" height="1.5" fill="#000"/><rect x="979.0" y="3" width="1.2" height="1.5" fill="#000"/><rect x="986.0" y="3" width="1.2" height="1.5" fill="#000"/><rect x="993.0" y="0" width="1.2" height="4.5" fill="#000"/><rect x="1000.0" y="3" width="1.2" height="1.5" fill="#000"/><rect x="1007.0" y="3" width="1.2" height="1.5" fill="#000"/><rect x="1014.0" y="3" width="1.2" height="1.5" fill="#000"/><rect x="1021.0" y="3" width="1.2" height="1.5" fill="#000"/><rect x="1028.0" y="0" width="1.2" height="4.5" fill="#000"/><rect x="1035.0" y="3" width="1.2" height="1.5" fill="#000"/><rect x="1042.0" y="3" width="1.2" height="1.5" fill="#000"/><rect x="1049.0" y="3" width="1.2" height="1.5" fill="#000"/><rect x="1056.0" y="3" width="1.2" height="1.5" fill="#000"/><rect x="1063.0" y="0" width="1.2" height="4.5" fill="#000"/><rect x="1070.0" y="3" width="1.2" height="1.5" fill="#000"/><rect x="1077.0" y="3" width="1.2" height="1.5" fill="#000"/><rect x="1084.0" y="3" width="1.2" height="1.5" fill="#000"/><rect x="1091.0" y="3" width="1.2" height="1.5" fill="#000"/><rect x="1098.0" y="0" width="1.2" height="4.5" fill="#000"/><rect x="1105.0" y="3" width="1.2" height="1.5" fill="#000"/><rect x="1112.0" y="3" width="1.2" height="1.5" fill="#000"/><rect x="1119.0" y="3" width="1.2" height="1.5" fill="#000"/><rect x="1126.0" y="3" width="1.2" height="1.5" fill="#000"/><rect x="1133.0" y="0" width="1.2" height="4.5" fill="#000"/><rect x="1140.0" y="3" width="1.2" height="1.5" fill="#000"/><rect x="1147.0" y="3" width="1.2" height="1.5" fill="#000"/><rect x="1154.0" y="3" width="1.2" height="1.5" fill="#000"/><rect x="1161.0" y="3" width="1.2" height="1.5" fill="#000"/><rect x="1168.0" y="0" width="1.2" height="4.5" fill="#000"/><rect x="1175.0" y="3" width="1.2" height="1.5" fill="#000"/><rect x="1182.0" y="3" width="1.2" height="1.5" fill="#000"/><rect x="1189.0" y="3" width="1.2" height="1.5" fill="#000"/><rect x="1196.0" y="3" width="1.2" height="1.5" fill="#000"/><rect x="1203.0" y="0" width="1.2" height="4.5" fill="#000"/><rect x="1210.0" y="3" width="1.2" height="1.5" fill="#000"/><rect x="1217.0" y="3" width="1.2" height="1.5" fill="#000"/><rect x="1224.0" y="3" width="1.2" height="1.5" fill="#000"/><rect x="1231.0" y="3" width="1.2" height="1.5" fill="#000"/><rect x="1238.0" y="0" width="1.2" height="4.5" fill="#000"/><rect x="1245.0" y="3" width="1.2" height="1.5" fill="#000"/><rect x="1252.0" y="3" width="1.2" height="1.5" fill="#000"/><rect x="1259.0" y="3" width="1.2" height="1.5" fill="#000"/><rect x="1266.0" y="3" width="1.2" height="1.5" fill="#000"/><rect x="1273.0" y="0" width="1.2" height="4.5" fill="#000"/><rect x="1280.0" y="3" width="1.2" height="1.5" fill="#000"/><rect x="1287.0" y="3" width="1.2" height="1.5" fill="#000"/><rect x="1294.0" y="3" width="1.2" height="1.5" fill="#000"/><rect x="1301.0" y="3" width="1.2" height="1.5" fill="#000"/><rect x="1308.0" y="0" width="1.2" height="4.5" fill="#000"/><rect x="1315.0" y="3" width="1.2" height="1.5" fill="#000"/><rect x="1322.0" y="3" width="1.2" height="1.5" fill="#000"/><rect x="1329.0" y="3" width="1.2" height="1.5" fill="#000"/><rect x="1336.0" y="3" width="1.2" height="1.5" fill="#000"/><rect x="1343.0" y="0" width="1.2" height="4.5" fill="#000"/><rect x="1350.0" y="3" width="1.2" height="1.5" fill="#000"/><rect x="1357.0" y="3" width="1.2" height="1.5" fill="#000"/><rect x="1364.0" y="3" width="1.2" height="1.5" fill="#000"/><rect x="1371.0" y="3" width="1.2" height="1.5" fill="#000"/><rect x="1378.0" y="0" width="1.2" height="4.5" fill="#000"/><rect x="1385.0" y="3" width="1.2" height="1.5" fill="#000"/><rect x="1392.0" y="3" width="1.2" height="1.5" fill="#000"/><rect x="1399.0" y="3" width="1.2" height="1.5" fill="#000"/><rect x="1406.0" y="3" width="1.2" height="1.5" fill="#000"/><rect x="1413.0" y="0" width="1.2" height="4.5" fill="#000"/><rect x="1420.0" y="3" width="1.2" height="1.5" fill="#000"/></svg>
<div class="rul" style="left:220.4px;top:98.5px">0</div>
<div class="rul" style="left:287.7px;top:98.5px">10</div>
<div class="rul" style="left:357.7px;top:98.5px">20</div>
<div class="rul" style="left:427.7px;top:98.5px">30</div>
<div class="rul" style="left:497.7px;top:98.5px">40</div>
<div class="rul" style="left:567.7px;top:98.5px">50</div>
<div class="rul" style="left:637.7px;top:98.5px">60</div>
<div class="rul" style="left:707.7px;top:98.5px">70</div>
<div class="rul" style="left:777.7px;top:98.5px">80</div>
<div class="rul" style="left:847.7px;top:98.5px">90</div>
<div class="rul" style="left:915.0px;top:98.5px">100</div>
<div class="rul" style="left:985.0px;top:98.5px">110</div>
<div class="rul" style="left:1055.0px;top:98.5px">120</div>
<div class="rul" style="left:1125.0px;top:98.5px">130</div>
<div class="rul" style="left:1195.0px;top:98.5px">140</div>
<div class="rul" style="left:1265.0px;top:98.5px">150</div>
<div class="rul" style="left:1335.0px;top:98.5px">160</div>
<div class="rul" style="left:1405.0px;top:98.5px">170</div>
<div class="code"><div>&lt;?php</div><div><span class="c">/**</span></div><div><span class="c"> * WordPress User Page</span></div><div><span class="c"> *</span></div><div><span class="c"> * Handles authentication, registering, resetting passwords, forgot password,</span></div><div><span class="c"> * and other user handling.</span></div><div><span class="c"> *</span></div><div><span class="c"> * @package WordPress</span></div><div><span class="c"> */</span></div><div></div><div><span class="c">/** Make sure that the WordPress bootstrap has run before continuing. */</span></div><div><span class="k">require</span>( dirname( <span class="k">__FILE__</span> ) . <span class="s">'/wp-load.php'</span> );</div><div></div><div><span class="c">// Redirect to HTTPS login if forced to use SSL.</span></div><div><span class="k">if</span> ( force_ssl_admin() &amp;&amp; ! is_ssl() ) <span style="background:#2ae2ea">{</span></div><div>  <span class="k">if</span> ( <span class="v">0</span> === strpos( <span class="v">$_SERVER</span>[<span class="s">'REQUEST_URI'</span>], <span class="s">'http'</span> ) ) {</div><div>    wp_safe_redirect( set_url_scheme( <span class="v">$_SERVER</span>[<span class="s">'REQUEST_URI'</span>], <span class="s">'https'</span> ) );</div><div>    <span class="k">exit</span>();</div><div>  } <span class="k">else</span> {</div><div>    wp_safe_redirect( <span class="s">'https://'</span> . <span class="v">$_SERVER</span>[<span class="s">'HTTP_HOST'</span>] . <span class="v">$_SERVER</span>[<span class="s">'REQUEST_URI'</span>] );</div><div>    <span class="k">exit</span>();</div><div>  }</div><div><span style="background:#2ae2ea">}</span></div><div></div><div><span class="c">/**</span></div><div><span class="c"> * Output the login page header.</span></div><div><span class="c"> *</span></div><div><span class="c"> * @since 2.1.0</span></div><div><span class="c"> *</span></div><div><span class="c"> * @param string   $title    Optional. WordPress login Page title to display in the `&lt;title&gt;` element.</span></div><div><span class="c"> *                           Default 'Log In'.</span></div><div><span class="c"> * @param string   $message  Optional. Message to display in header. Default empty.</span></div><div><span class="c"> * @param WP_Error $wp_error Optional. The error to pass. Default is a WP_Error instance.</span></div><div><span class="c"> */</span></div><div><span class="k">function</span> login_header( <span class="v">$title</span> = <span class="s">'Log In'</span>, <span class="v">$message</span> = <span class="s">''</span>, <span class="v">$wp_error</span> = <span class="k">null</span> ) {</div><div>  <span class="k">global</span> <span class="v">$error</span>, <span class="v">$interim_login</span>, <span class="v">$action</span>;</div><div></div><div>  <span class="c">// Don't index any of these forms</span></div><div>  add_action( <span class="s">'login_head'</span>, <span class="s">'wp_sensitive_page_meta'</span> );</div><div></div><div>  add_action( <span class="s">'login_head'</span>, <span class="s">'wp_login_viewport_meta'</span> );</div><div></div><div>  <span class="k">if</span> ( ! is_wp_error( <span class="v">$wp_error</span> ) ) {</div><div>    <span class="v">$wp_error</span> = <span class="k">new</span> WP_Error();</div><div>  }</div><div></div><div>  <span class="c">// Shake it!</span></div><div>  <span class="v">$shake_error_codes</span> = <span class="k">array</span>( <span class="s">'empty_password'</span>, <span class="s">'empty_email'</span>, <span class="s">'invalid_email'</span>, <span class="s">'invalidcombo'</span>, <span class="s">'empty_username'</span>, <span class="s">'invalid_username'</span>, <span class="s">'incorrect_password'</span> );</div><div>  <span class="c">/**</span></div><div>  <span class="c"> * Filters the error codes array for shaking the login form.</span></div><div>  <span class="c"> *</span></div><div>  <span class="c"> * @since 3.0.0</span></div><div>  <span class="c"> *</span></div></div>
<div class="ln">1
2
3
4
5
6
7
8
9
10
11
12
13
14
15
16
17
18
19
20
21
22
23
24
25
26
27
28
29
30
31
32
33
34
35
36
37
38
39
40
41
42
43
44
45
46
47
48
49
50
51
52
53</div>
<div class="b" style="left:502px;top:338px;width:2px;height:15px;background:#b0102a;"></div>
<div class="t" style="left:1152px;top:924.9px;font-size:30px;line-height:34px;font-weight:bold;font-style:italic;color:#3a0ad0;-webkit-text-stroke:1.4px #1a0066;letter-spacing:0px;transform:scaleX(0.985);transform-origin:0 0">foto.ijacek007.cz :-)</div>
<div class="b" style="left:0px;top:0px;width:1429px;height:1px;background:#000;"></div>
<div class="b" style="left:0px;top:0px;width:1px;height:963px;background:#000;"></div>
<div class="b" style="left:1427px;top:0px;width:2px;height:963px;background:#000;"></div>
<div class="b" style="left:0px;top:961px;width:1429px;height:2px;background:#000;"></div>
</body></html>
